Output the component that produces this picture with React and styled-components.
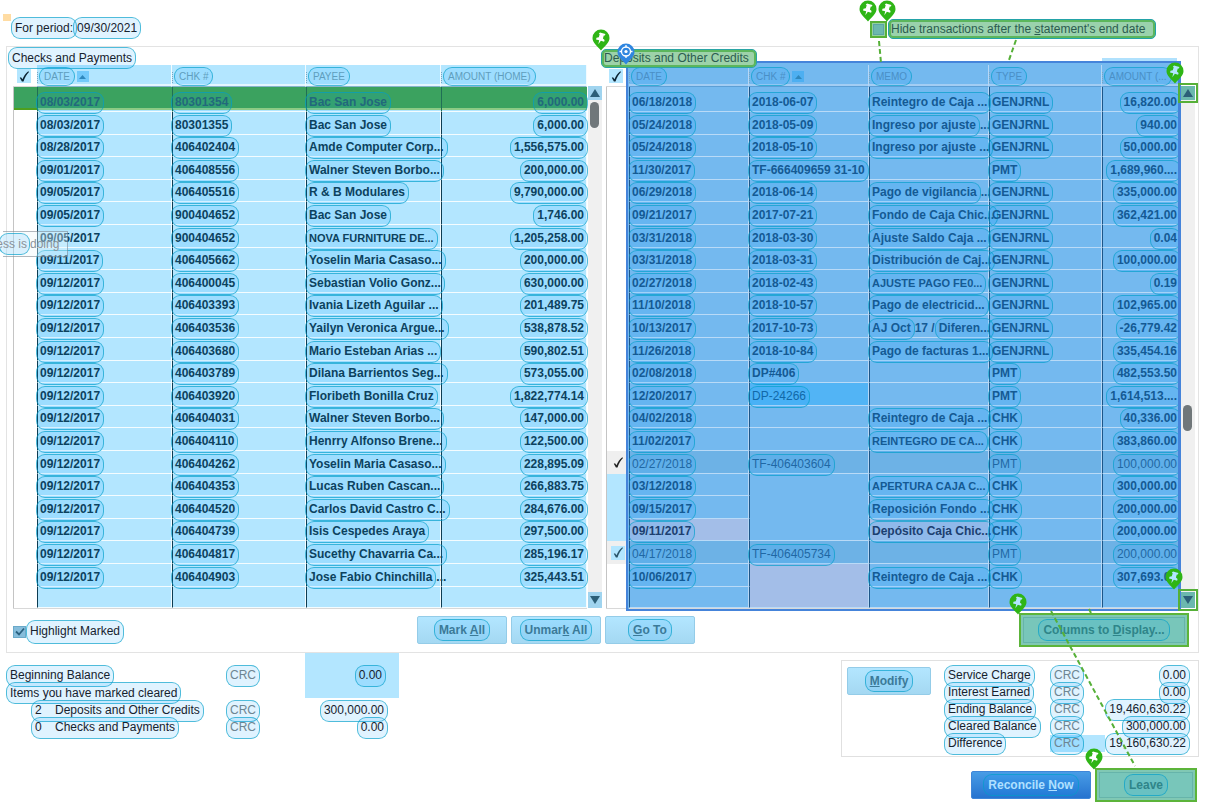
import React from "react";
import styled, { createGlobalStyle, css } from "styled-components";

const Global = createGlobalStyle`
  * { box-sizing: border-box; }
  body {
    margin: 0;
    background: #fff;
    color: #16222e;
    font: 12px/17px "Liberation Sans", Arial, sans-serif;
  }
  button, input { font: inherit; margin: 0; }
`;

const Page = styled.main`
  position: relative;
  min-width: 1100px;
  overflow: hidden;
  padding-bottom: 7px;
`;

const Pill = styled.span`
  display: inline-flex;
  align-items: center;
  flex: none;
  height: ${(p) => p.$h || 22}px;
  padding: 0 3px;
  border: 1px solid rgba(0, 158, 200, 0.65);
  border-radius: 9px;
  background: rgba(0, 160, 255, 0.12);
  white-space: pre;
`;

const Crc = styled(Pill)`
  color: #6d8592;
`;

/* ---------- markers ---------- */

const PinSvg = styled.svg`
  position: absolute;
  z-index: 5;
  left: ${(p) => p.$x ?? -10}px;
  top: ${(p) => p.$y ?? -21}px;
  width: 18px;
  height: 22px;
  pointer-events: none;
`;

function Pin({ x, y, tone = "#2fb516", glyph = "#fff" }) {
  return (
    <PinSvg viewBox="0 0 18 22" $x={x} $y={y} aria-hidden="true">
      <path d="M9 .5a8.500 8.500 0 0 1 8.500 8.500c0 4.500-4.500 8-8.500 12.500C5 17 .5 13.500 .5 9A8.500 8.500 0 0 1 9 .5z" fill={tone} />
      <path
        d="M8 3.400l5.400 1.500-.5 1.700-1.100-.1-.9 2.900 1.700 1.700-.5 1.600-3.200-.9-2.600 3.500.9-4-3.200-.9.5-1.600 2.300-.6.900-2.900-.9-.6z"
        fill={glyph}
      />
    </PinSvg>
  );
}

function TargetPin() {
  return (
    <PinSvg viewBox="0 0 18 22" $x={11} $y={-4} aria-hidden="true">
      <path d="M9 .5a8.500 8.500 0 0 1 8.500 8.500c0 4.500-4.500 8-8.500 12.500C5 17 .5 13.500 .5 9A8.500 8.500 0 0 1 9 .5z" fill="#2f86e0" />
      <circle cx="9" cy="8.500" r="4.500" fill="none" stroke="#fff" strokeWidth="1.300" />
      <circle cx="9" cy="8.500" r="1.600" fill="#fff" />
      <path d="M9 2v2.500M9 12.500V15M2.500 8.500H5M13 8.500h2.500" stroke="#fff" strokeWidth="1.300" />
    </PinSvg>
  );
}

const Lead = styled.svg`
  position: absolute;
  z-index: 4;
  left: ${(p) => p.$x}px;
  top: ${(p) => p.$y}px;
  overflow: visible;
  pointer-events: none;
  stroke: #56b038;
  stroke-width: 2;
  stroke-dasharray: 5 3;
`;

const Anchor = styled.span`
  position: relative;
  display: inline-flex;
  ${(p) => p.$raised && "z-index: 3;"}
  ${(p) => p.$end && "margin-left: auto;"}
`;

/* ---------- top bar ---------- */

const TopBar = styled.header`
  display: flex;
  justify-content: space-between;
  align-items: flex-start;
  height: 46px;
  padding: 17px 53px 0 11px;
`;

const Flag = styled.span`
  position: absolute;
  left: 3px;
  top: 14px;
  width: 8px;
  height: 7px;
  background: #ffdca3;
`;

const Period = styled.div`
  display: flex;
  ${Pill} + ${Pill} { margin-left: -4px; }
`;

const HideOption = styled.div`
  display: flex;
  align-items: center;
  gap: 1px;
  padding-top: 2px;
`;

const HideBox = styled.input`
  appearance: none;
  width: 17px;
  height: 17px;
  border: 2px solid #56b038;
  background: #6cb8ae;
  box-shadow: inset 0 0 0 1px #93d0a0, inset 0 0 0 2px #5ba5a5;
`;

const HideLabel = styled.label`
  display: flex;
  align-items: center;
  height: 20px;
  width: 268px;
  padding: 0 2px;
  border: 1px solid #23a3a8;
  border-radius: 5px;
  background: #9ad2ac;
  box-shadow: inset 0 0 0 2px #5cb65c;
  color: #2c5c50;
  white-space: pre;
`;

/* ---------- panel ---------- */

const Panel = styled.section`
  margin: 0 10px 0 6px;
  border: 1px solid #e3e3e3;
`;

const Lists = styled.div`
  display: grid;
  grid-template-columns: 1fr 1fr;
  gap: 3px;
  padding: 0 2px 0 6px;
`;

const List = styled.div`
  position: relative;
  min-width: 0;
`;

const Title = styled.h2`
  position: relative;
  z-index: 2;
  height: 18px;
  margin: 0 0 0 -5px;
  font-size: 12px;
  font-weight: normal;
`;

const GreenTitle = styled.span`
  display: inline-flex;
  align-items: center;
  position: relative;
  height: 19px;
  width: 156px;
  margin-top: 2px;
  padding: 0 2px;
  border: 1px solid #2aa5a5;
  border-radius: 5px;
  background: #9dd2a9;
  box-shadow: inset 0 0 0 2px #5cb65c;
  color: #2c5c50;
`;

const ListBody = styled.div`
  display: flex;
`;

const Grid = styled.table`
  flex: 1;
  width: 0;
  table-layout: fixed;
  border-spacing: 0;
  border-collapse: separate;
  border-bottom: 1px solid #d8d8d8;
`;

const Head = styled.th`
  position: relative;
  height: 22px;
  padding: 0;
  background: ${(p) => (p.$deep ? "#74b9ef" : "#b3e6ff")};
  border-right: 1px solid ${(p) => (p.$deep ? "#b6d7f6" : "#f2fbff")};
  border-bottom: 1px solid ${(p) => (p.$deep ? "#5c9fd6" : "#86b4cc")};
  box-shadow: inset 0 -2px ${(p) => (p.$deep ? "#a3cdf3" : "#e4f6ff")};
  font-size: 10px;
  font-weight: normal;
  text-align: left;
  color: ${(p) => (p.$deep ? "#4a8fc6" : "#5f9dbd")};
  vertical-align: top;
  &::before {
    content: "";
    position: absolute;
    left: 0;
    top: 7px;
    height: 11px;
    border-left: 1px dotted #7aa5c0;
  }
  ${(p) =>
    p.$lifted &&
    css`
      &::after {
        content: "";
        position: absolute;
        left: 0;
        right: 2px;
        top: -7px;
        height: 7px;
        background: rgba(150, 215, 252, 0.75);
      }
    `}
`;

const HeadInner = styled.div`
  display: flex;
  align-items: center;
  gap: 2px;
  height: 20px;
  padding: 3px 0 0 2px;
  ${Pill} {
    padding: 0 4px;
  }
`;

const Sort = styled.span`
  display: grid;
  place-items: center;
  width: 12px;
  height: 11px;
  background: rgba(20, 160, 245, 0.4);
`;

const CheckHead = styled.th`
  height: 22px;
  padding: 4px 0 0 ${(p) => (p.$deep ? 3 : 4)}px;
  vertical-align: top;
  border-bottom: 1px solid #d8d8d8;
`;

const Mark = styled.span`
  display: grid;
  place-items: center;
  width: 14px;
  height: 14px;
  background: ${(p) => (p.$tint ? "#b3e6ff" : "transparent")};
`;

const Row = styled.tr`
  height: 23px;
  &:nth-child(5n + 3),
  &:nth-child(5n) {
    height: 22px;
  }
  &:first-child {
    height: 25px;
  }
  &:last-child {
    height: 21px;
  }
`;

const fills = {
  base: "#b3e6ff",
  deep: "#74b9ef",
  muted: "#6db2e6",
  lilac: "#a3bee8",
  bright: "#52b4f5",
};

const Cell = styled.td`
  padding: 0;
  vertical-align: bottom;
  background: ${(p) => fills[p.$fill]};
  border-left: 1px solid ${(p) => (p.$deep ? "#1d5688" : "#0d3c52")};
  border-right: 1px solid ${(p) => (p.$deep ? "#b6d7f6" : "#f2fbff")};
  border-bottom: 1px solid
    ${(p) => (p.$noLine ? "transparent" : p.$deep ? "#b9daf7" : "#f4fcff")};
  color: ${(p) => (p.$dark ? "#1c3f70" : p.$deep ? "#145a94" : "#0c425e")};
  font-weight: ${(p) => (p.$fill === "muted" || p.$light ? "normal" : "bold")};
  ${(p) => p.$caps && "font-size: 11px;"}
  ${(p) => p.$light && "color: #1168a8;"}
  ${(p) => p.$fill === "muted" && "color: #1f68a4;"}
  ${(p) =>
    p.$picked &&
    css`
      background: linear-gradient(#3ba25f 21px, #8dcb85 21px, #8dcb85 23px, #b3e6ff 23px);
      border-color: #7fc79a transparent #f4fcff #1f6f55;
      color: #22687c;
    `}
`;

const CellInner = styled.div`
  display: flex;
  align-items: center;
  justify-content: ${(p) => (p.$right ? "flex-end" : "flex-start")};
  height: 17px;
  margin: 0 -2px;
  white-space: pre;
`;

const Plain = styled.span`
  padding: 0 4px;
`;

const CheckCell = styled.td`
  padding: 0 0 0 4px;
  vertical-align: ${(p) => (p.$kind ? "middle" : "top")};
  border-left: 1px solid #c4c4c4;
  background: ${(p) =>
    p.$kind === "check" || p.$kind === "tinted"
      ? "#efefef"
      : p.$kind === "blue"
        ? "#b3e6ff"
        : p.$kind === "picked"
          ? "linear-gradient(#3ba25f 21px, #4e9f1e 21px, #4e9f1e 23px, #fff 23px)"
          : "#fff"};
`;

const Frame = styled.div`
  position: absolute;
  left: 20px;
  right: 15px;
  top: 14px;
  bottom: -2px;
  border: 2px solid #4584da;
  border-right-width: 3px;
  box-shadow: inset 1px 0 #74b9ef, inset 0 2px #74b9ef;
  pointer-events: none;
`;

const Scroll = styled.div`
  display: flex;
  flex-direction: column;
  width: 16px;
  padding: 21px 1px 1px;
`;

const ScrollTrack = styled.div`
  position: relative;
  flex: 1;
  background: #f0f0f0;
`;

const Thumb = styled.span`
  position: absolute;
  left: 2px;
  top: ${(p) => p.$top};
  width: 9px;
  height: 26px;
  border-radius: 5px;
  background: #70777a;
`;

const Arrow = styled.button`
  display: grid;
  place-items: center;
  width: 14px;
  height: ${(p) => (p.$down ? 16 : 14)}px;
  padding: 0;
  border: 0;
  background: ${(p) => (p.$framed ? "#6bb8ae" : "#a0d4ef")};
  ${(p) => p.$framed && "outline: 2px solid #56b038; outline-offset: 1px;"}
`;

/* ---------- buttons ---------- */

const Actions = styled.div`
  display: flex;
  align-items: center;
  gap: 4px;
  height: 43px;
  padding: 0 9px 1px 6px;
`;

const Highlight = styled.div`
  display: flex;
  align-items: center;
  width: 400px;
  padding-top: 3px;
`;

const HighlightBox = styled.span`
  position: relative;
  display: inline-grid;
  place-items: center;
  width: 13px;
  height: 12px;
  input {
    appearance: none;
    position: absolute;
    inset: 0;
    border: 1px solid #6aa9c9;
    background: #86bddb;
  }
  svg {
    position: relative;
    pointer-events: none;
  }
`;

const Button = styled.button`
  display: inline-flex;
  align-items: center;
  justify-content: center;
  width: ${(p) => p.$w || 90}px;
  height: 28px;
  padding: 0;
  border: 1px solid #94cce8;
  border-radius: 2px;
  background: linear-gradient(#b3e6ff, #a4d8f2);
  color: #3b7a98;
  font-weight: bold;
  ${(p) =>
    p.$kind === "primary" &&
    css`
      border-color: #3f86d8;
      background: linear-gradient(#489ce6, #2673cf);
      color: #b0e0ff;
    `}
  ${(p) =>
    p.$kind === "green" &&
    css`
      height: 34px;
      border: 2px solid #5cb43a;
      border-radius: 0;
      background: #78c6ba;
      box-shadow: inset 0 0 0 2px #80c8b4, inset 0 0 0 3px #66b4aa;
      color: #2f8589;
    `}
`;

const ButtonPill = styled(Pill)`
  padding: 0 4px;
`;

/* ---------- summaries ---------- */

const Footer = styled.footer`
  display: flex;
  justify-content: space-between;
  align-items: flex-start;
  padding: 0 10px 0 6px;
`;

const Summary = styled.table`
  width: 393px;
  table-layout: fixed;
  border-spacing: 0;
  td, th {
    height: 17px;
    padding: 0;
    font-weight: normal;
    text-align: left;
    vertical-align: middle;
    line-height: 0;
  }
  tr:first-child > th, tr:first-child > td:nth-child(2) {
    height: 31px;
    padding-top: 14px;
  }
  tr:nth-child(2) > th { height: 18px; }
  td:last-child { text-align: right; }
  ${Pill}, ${Crc} { margin: -3px 0; line-height: 17px; }
`;

const Indent = styled.th`
  && { padding-left: 25px; }
`;

const SumAmount = styled.td`
  && { padding-right: 11px; }
`;

const BlueAmountCell = styled.td`
  && { vertical-align: top; }
`;

const BlueAmount = styled.div`
  display: flex;
  align-items: center;
  justify-content: flex-end;
  height: 45px;
  padding-right: 13px;
  background: #b3e6ff;
`;

const Side = styled.div`
  width: 358px;
`;

const Totals = styled.section`
  display: flex;
  justify-content: space-between;
  align-items: flex-start;
  margin-top: 7px;
  height: 97px;
  padding: 6px 8px 0 5px;
  border: 1px solid #e0e0e0;
`;

const TotalsTable = styled.table`
  width: 246px;
  table-layout: fixed;
  border-spacing: 0;
  td, th {
    height: 17px;
    padding: 0;
    font-weight: normal;
    text-align: left;
    line-height: 0;
  }
  td:last-child { text-align: right; }
  ${Pill}, ${Crc} { margin: -3px 0; line-height: 17px; }
`;

const CrcCell = styled.td`
  background: ${(p) => (p.$tint ? "#b3e6ff" : "none")};
`;

const Finish = styled.div`
  display: flex;
  align-items: center;
  justify-content: flex-end;
  gap: 4px;
  padding: 11px 2px 0 0;
`;

const Hint = styled.div`
  position: absolute;
  z-index: 3;
  left: 3px;
  top: 231px;
  display: flex;
  align-items: center;
  width: 65px;
  height: 26px;
  border: 1px solid rgba(90, 100, 110, 0.45);
  border-left: 0;
  background: rgba(235, 245, 250, 0.35);
  color: #8b9299;
  font-size: 12px;
  white-space: pre;
  pointer-events: none;
  ${Pill} {
    justify-content: flex-end;
    width: 31px;
    margin-left: -4px;
    padding: 0 2px;
    overflow: hidden;
  }
`;

/* ---------- data ---------- */

const checks = [
  ["08/03/2017", "80301354", "Bac San Jose", "6,000.00"],
  ["08/03/2017", "80301355", "Bac San Jose", "6,000.00"],
  ["08/28/2017", "406402404", "Amde Computer Corp...", "1,556,575.00"],
  ["09/01/2017", "406408556", "Walner Steven Borbo...", "200,000.00"],
  ["09/05/2017", "406405516", "R & B Modulares", "9,790,000.00"],
  ["09/05/2017", "900404652", "Bac San Jose", "1,746.00"],
  ["09/05/2017", "900404652", "NOVA FURNITURE DE...", "1,205,258.00"],
  ["09/11/2017", "406405662", "Yoselin Maria Casaso...", "200,000.00"],
  ["09/12/2017", "406400045", "Sebastian Volio Gonz...", "630,000.00"],
  ["09/12/2017", "406403393", "Ivania Lizeth Aguilar ...", "201,489.75"],
  ["09/12/2017", "406403536", "Yailyn Veronica Argue...", "538,878.52"],
  ["09/12/2017", "406403680", "Mario Esteban Arias ...", "590,802.51"],
  ["09/12/2017", "406403789", "Dilana Barrientos Seg...", "573,055.00"],
  ["09/12/2017", "406403920", "Floribeth Bonilla Cruz", "1,822,774.14"],
  ["09/12/2017", "406404031", "Walner Steven Borbo...", "147,000.00"],
  ["09/12/2017", "406404110", "Henrry Alfonso Brene...", "122,500.00"],
  ["09/12/2017", "406404262", "Yoselin Maria Casaso...", "228,895.09"],
  ["09/12/2017", "406404353", "Lucas Ruben Cascan...", "266,883.75"],
  ["09/12/2017", "406404520", "Carlos David Castro C...", "284,676.00"],
  ["09/12/2017", "406404739", "Isis Cespedes Araya", "297,500.00"],
  ["09/12/2017", "406404817", "Sucethy Chavarria Ca...", "285,196.17"],
  ["09/12/2017", "406404903", "Jose Fabio Chinchilla|...", "325,443.51"],
  ["", "", "", ""],
];

const deposits = [
  ["06/18/2018", "2018-06-07", "Reintegro de Caja ...", "GENJRNL", "16,820.00"],
  ["05/24/2018", "2018-05-09", "Ingreso por ajuste|...", "GENJRNL", "940.00"],
  ["05/24/2018", "2018-05-10", "Ingreso por ajuste ...", "GENJRNL", "50,000.00"],
  ["11/30/2017", "TF-666409659 31-10", "", "PMT", "1,689,960...."],
  ["06/29/2018", "2018-06-14", "Pago de vigilancia|...", "GENJRNL", "335,000.00"],
  ["09/21/2017", "2017-07-21", "Fondo de Caja Chic...", "GENJRNL", "362,421.00"],
  ["03/31/2018", "2018-03-30", "Ajuste Saldo Caja ...", "GENJRNL", "0.04"],
  ["03/31/2018", "2018-03-31", "Distribución de Caj...", "GENJRNL", "100,000.00"],
  ["02/27/2018", "2018-02-43", "AJUSTE PAGO FE0...", "GENJRNL", "0.19"],
  ["11/10/2018", "2018-10-57", "Pago de electricid...", "GENJRNL", "102,965.00"],
  ["10/13/2017", "2017-10-73", "AJ Oct|17 /|Diferen...", "GENJRNL", "-26,779.42"],
  ["11/26/2018", "2018-10-84", "Pago de facturas 1...", "GENJRNL", "335,454.16"],
  ["02/08/2018", "DP#406", "", "PMT", "482,553.50"],
  ["12/20/2017", "DP-24266", "", "PMT", "1,614,513...."],
  ["04/02/2018", "", "Reintegro de Caja ...", "CHK", "40,336.00"],
  ["11/02/2017", "", "REINTEGRO DE CA...", "CHK", "383,860.00"],
  ["02/27/2018", "TF-406403604", "", "PMT", "100,000.00"],
  ["03/12/2018", "", "APERTURA CAJA C...", "CHK", "300,000.00"],
  ["09/15/2017", "", "Reposición Fondo ...", "CHK", "200,000.00"],
  ["09/11/2017", "", "Depósito Caja Chic...", "CHK", "200,000.00"],
  ["04/17/2018", "TF-406405734", "", "PMT", "200,000.00"],
  ["10/06/2017", "", "Reintegro de Caja ...", "CHK", "307,693.00"],
  ["", "", "", "", ""],
];

const depositMarks = { 16: "check", 17: "blue", 18: "blue", 19: "blue", 20: "tinted" };

function depositFill(r, c) {
  if (r === 16 || r === 20) return "muted";
  if (r === 13 && c === 1) return "bright";
  if (r === 19 && (c === 0 || c === 2)) return "lilac";
  if (r >= 21 && c === 1) return "lilac";
  return "deep";
}

const isCaps = (text, c) => c === 2 && text !== "" && text === text.toUpperCase();

/* ---------- parts ---------- */

function Tick({ color = "#0c2433" }) {
  return (
    <svg width="13" height="13" viewBox="0 0 13 13" aria-hidden="true">
      <path d="M1.800 7.800L3 7.200 4.500 9.300C5.500 6.500 7.500 3 10.300 1.200L11 2C8.500 4.500 6.800 7.500 5.500 11.500H3.900z" fill={color} />
    </svg>
  );
}

function Triangle({ down, small }) {
  return (
    <svg width={small ? 7 : 10} height={small ? 4 : 8} viewBox="0 0 10 8" preserveAspectRatio="none" aria-hidden="true">
      <path d={down ? "M0 0h10L5 8z" : "M0 8h10L5 0z"} fill={small ? "#2f88bd" : "#2b5f78"} />
    </svg>
  );
}

function Value({ text, plain }) {
  if (!text) return null;
  if (plain) return <Plain>{text}</Plain>;
  const [lead, middle, tail] = text.split("|");
  return (
    <>
      <Pill>{lead}</Pill>
      {middle}
      {tail && <Pill>{tail}</Pill>}
    </>
  );
}

function HeaderCells({ names, sorted, deep }) {
  return (
    <thead>
      <tr>
        <CheckHead $deep={deep} aria-label="Cleared">
          <Mark $tint><Tick /></Mark>
        </CheckHead>
        {names.map((n, i) => (
          <Head key={n} scope="col" $deep={deep} $lifted={deep && i === 4}>
            <HeadInner>
              <Pill $h={19}>{n}</Pill>
              {sorted === i && <Sort><Triangle small /></Sort>}
            </HeadInner>
          </Head>
        ))}
      </tr>
    </thead>
  );
}

function ScrollBar({ top, framed }) {
  return (
    <Scroll>
      <Anchor $raised={framed}>
        <Arrow type="button" aria-label="Scroll up" $framed={framed}><Triangle /></Arrow>
        {framed && <Pin x={-15} y={-24} glyph="#b3e6ff" />}
      </Anchor>
      <ScrollTrack><Thumb $top={top} /></ScrollTrack>
      <Anchor $raised={framed}>
        <Arrow type="button" aria-label="Scroll down" $down $framed={framed}><Triangle down /></Arrow>
        {framed && <Pin x={-16} y={-24} glyph="#b3e6ff" />}
      </Anchor>
    </Scroll>
  );
}

function ChecksTable() {
  return (
    <Grid aria-label="Checks and Payments">
      <colgroup>
        <col style={{ width: 24 }} /><col style={{ width: 135 }} /><col style={{ width: 134 }} />
        <col style={{ width: 135 }} /><col style={{ width: 146 }} />
      </colgroup>
      <HeaderCells names={["DATE", "CHK #", "PAYEE", "AMOUNT (HOME)"]} sorted={0} />
      <tbody>
        {checks.map((row, r) => (
          <Row key={r}>
            <CheckCell $kind={r === 0 ? "picked" : undefined} />
            {row.map((text, c) => (
              <Cell key={c} $fill="base" $picked={r === 0} $caps={isCaps(text, c)}>
                <CellInner $right={c === 3}><Value text={text} plain={r === 6 && c === 0} /></CellInner>
              </Cell>
            ))}
          </Row>
        ))}
      </tbody>
    </Grid>
  );
}

function DepositsTable() {
  return (
    <Grid aria-label="Deposits and Other Credits">
      <colgroup>
        <col style={{ width: 23 }} /><col style={{ width: 120 }} /><col style={{ width: 120 }} />
        <col style={{ width: 120 }} /><col style={{ width: 113 }} /><col style={{ width: 78 }} />
      </colgroup>
      <HeaderCells names={["DATE", "CHK #", "MEMO", "TYPE", "AMOUNT (..."]} sorted={1} deep />
      <tbody>
        {deposits.map((row, r) => {
          const kind = depositMarks[r];
          return (
            <Row key={r}>
              <CheckCell $kind={kind}>
                {(kind === "check" || kind === "tinted") && (
                  <Mark $tint={kind === "tinted"}><Tick color={kind === "tinted" ? "#2b566b" : "#222"} /></Mark>
                )}
              </CheckCell>
              {row.map((text, c) => (
                <Cell
                  key={c}
                  $deep
                  $fill={depositFill(r, c)}
                  $dark={r === 19 && (c === 0 || c === 2)}
                  $light={r === 13 && c === 1}
                  $noLine={c === 1 && (r === 17 || r === 18 || r === 21)}
                  $caps={isCaps(text, c)}
                >
                  <CellInner $right={c === 4}><Value text={text} /></CellInner>
                </Cell>
              ))}
            </Row>
          );
        })}
      </tbody>
    </Grid>
  );
}

export default function App() {
  return (
    <>
      <Global />
      <Page>
        <Flag />
        <TopBar>
          <Period>
            <Pill>For period:</Pill>
            <Pill>09/30/2021</Pill>
          </Period>
          <HideOption>
            <Anchor>
              <HideBox type="checkbox" id="hide-after" />
              <Pin x={-11} />
              <Lead $x={9} $y={20} width="4" height="22"><path d="M0 0l2 22" /></Lead>
            </Anchor>
            <Anchor>
              <HideLabel htmlFor="hide-after">Hide transactions after the <u>s</u>tatement's end date</HideLabel>
              <Pin y={-19} />
              <Lead $x={121} $y={21} width="8" height="20"><path d="M7 0L0 20" /></Lead>
            </Anchor>
          </HideOption>
        </TopBar>

        <Panel>
          <Lists>
            <List>
              <Title><Pill>Checks and Payments</Pill></Title>
              <ListBody>
                <ChecksTable />
                <ScrollBar top="2px" />
              </ListBody>
            </List>
            <List>
              <Title>
                <GreenTitle>
                  Deposits and Other Credits
                  <Pin y={-21} />
                </GreenTitle>
              </Title>
              <ListBody>
                <DepositsTable />
                <ScrollBar top="62%" framed />
              </ListBody>
              <Frame />
              <TargetPin />
            </List>
          </Lists>

          <Actions>
            <Highlight>
              <HighlightBox>
                <input type="checkbox" id="highlight" defaultChecked />
                <svg width="10" height="9" viewBox="0 0 10 9" aria-hidden="true">
                  <path d="M1 4.500L4 7.500 9 1.500" fill="none" stroke="#2b6280" strokeWidth="1.800" />
                </svg>
              </HighlightBox>
              <Pill $h={24} as="label" htmlFor="highlight">Highlight Marked</Pill>
            </Highlight>
            <Button type="button"><ButtonPill><span>Mark <u>A</u>ll</span></ButtonPill></Button>
            <Button type="button"><ButtonPill><span>Unmar<u>k</u> All</span></ButtonPill></Button>
            <Button type="button"><ButtonPill><span><u>G</u>o To</span></ButtonPill></Button>
            <Anchor $end>
              <Button type="button" $w={170} $kind="green">
                <ButtonPill><span>Columns to <u>D</u>isplay...</span></ButtonPill>
              </Button>
              <Pin y={-20} glyph="#b3e6ff" />
              <Lead $x={70} $y={-4} width="3" height="4"><path d="M0 0l2 4" /></Lead>
            </Anchor>
          </Actions>
        </Panel>

        <Footer>
          <Summary>
            <colgroup>
              <col style={{ width: 220 }} /><col style={{ width: 79 }} /><col style={{ width: 94 }} />
            </colgroup>
            <tbody>
              <tr>
                <th scope="row"><Pill>Beginning Balance</Pill></th>
                <td><Crc>CRC</Crc></td>
                <BlueAmountCell rowSpan={2}><BlueAmount><Pill>0.00</Pill></BlueAmount></BlueAmountCell>
              </tr>
              <tr><th scope="row" colSpan={2}><Pill>Items you have marked cleared</Pill></th></tr>
              <tr>
                <Indent scope="row"><Pill>{"2    Deposits and Other Credits"}</Pill></Indent>
                <td><Crc>CRC</Crc></td>
                <SumAmount><Pill>300,000.00</Pill></SumAmount>
              </tr>
              <tr>
                <Indent scope="row"><Pill>{"0    Checks and Payments"}</Pill></Indent>
                <td><Crc>CRC</Crc></td>
                <SumAmount><Pill>0.00</Pill></SumAmount>
              </tr>
            </tbody>
          </Summary>

          <Side>
            <Totals>
              <Button type="button" $w={84}><ButtonPill><span><u>M</u>odify</span></ButtonPill></Button>
              <TotalsTable>
                <colgroup>
                  <col style={{ width: 106 }} /><col style={{ width: 55 }} /><col style={{ width: 85 }} />
                </colgroup>
                <tbody>
                  {[
                    ["Service Charge", "0.00"],
                    ["Interest Earned", "0.00"],
                    ["Ending Balance", "19,460,630.22"],
                    ["Cleared Balance", "300,000.00"],
                    ["Difference", "19,160,630.22"],
                  ].map(([name, amount], i) => (
                    <tr key={name}>
                      <th scope="row"><Pill>{name}</Pill></th>
                      <CrcCell $tint={i === 4}><Crc>CRC</Crc></CrcCell>
                      <td><Pill>{amount}</Pill></td>
                    </tr>
                  ))}
                </tbody>
              </TotalsTable>
            </Totals>
            <Finish>
              <Button type="button" $w={120} $kind="primary">
                <ButtonPill><span>Reconcile <u>N</u>ow</span></ButtonPill>
              </Button>
              <Anchor>
                <Button type="button" $w={102} $kind="green"><ButtonPill>Leave</ButtonPill></Button>
                <Pin y={-20} />
                <Lead $x={-44} $y={-157} width="84" height="156"><path d="M0 0l84 155" /></Lead>
              </Anchor>
            </Finish>
          </Side>
        </Footer>

        <Hint><Pill>ess is</Pill>doing</Hint>
      </Page>
    </>
  );
}
